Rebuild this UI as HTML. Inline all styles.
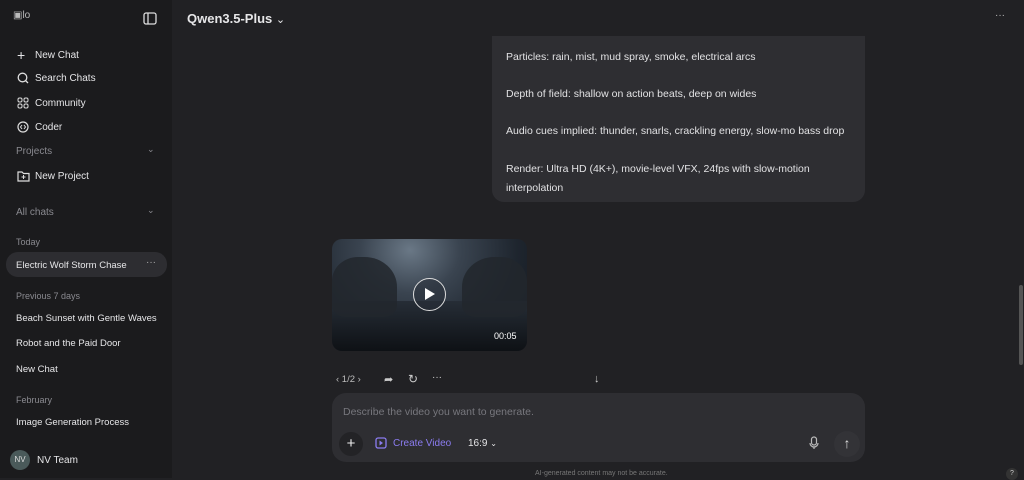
<!DOCTYPE html>
<html><head><style>
*{margin:0;padding:0;box-sizing:border-box}
body{width:1024px;height:478px;overflow:hidden;background:#212124;font-family:"Liberation Sans",sans-serif;color:#e6e6e8;position:relative}
.sb{position:absolute;left:0;top:0;width:172px;height:478px;background:#1b1b1d}
.t{position:absolute;font-size:10px;white-space:nowrap}
.g{color:#8a8a90;font-size:9px}
.ic{position:absolute}
.bub{position:absolute;left:492px;top:36px;width:373px;height:166px;background:#2e2e32;border-radius:0 0 12px 12px}
.bub p{position:absolute;left:14px;font-size:10.5px;color:#e2e2e4;line-height:19px}
.vid{position:absolute;left:332px;top:239px;width:195px;height:112px;border-radius:10px;overflow:hidden;background:radial-gradient(ellipse at 40% 10%,#6a7886 0%,#3a4450 30%,#1e252e 65%,#12161c 100%)}
.in{position:absolute;left:332px;top:393px;width:533px;height:69px;background:#2e2e32;border-radius:14px}
</style></head><body>
<div class="sb">
<div class="t" style="left:13px;top:10px;color:#bbb;font-size:10px">▣lo</div>
<svg class="ic" style="left:143px;top:12px" width="14" height="13" viewBox="0 0 14 13"><rect x="1" y="1" width="12" height="11" rx="2" fill="none" stroke="#ddd" stroke-width="1.3"/><line x1="5" y1="1" x2="5" y2="12" stroke="#ddd" stroke-width="1.3"/></svg>
<div class="t" style="left:17px;top:47px;font-size:14px">+</div><div class="t" style="left:35px;top:50px">New Chat</div>
<svg class="ic" style="left:17px;top:72px" width="12" height="12"><circle cx="5.5" cy="5.5" r="4.3" fill="none" stroke="#ddd" stroke-width="1.3"/><line x1="8.5" y1="8.5" x2="11" y2="11" stroke="#ddd" stroke-width="1.3"/></svg><div class="t" style="left:35px;top:73px">Search Chats</div>
<svg class="ic" style="left:17px;top:97px" width="12" height="12"><rect x="1" y="1" width="4" height="4" rx="1.5" fill="none" stroke="#ddd"/><rect x="7" y="1" width="4" height="4" rx="1.5" fill="none" stroke="#ddd"/><rect x="1" y="7" width="4" height="4" rx="1.5" fill="none" stroke="#ddd"/><rect x="7" y="7" width="4" height="4" rx="1.5" fill="none" stroke="#ddd"/></svg><div class="t" style="left:35px;top:98px">Community</div>
<svg class="ic" style="left:17px;top:121px" width="12" height="12"><circle cx="6" cy="6" r="5" fill="none" stroke="#ddd" stroke-width="1.2"/><path d="M5 4L3.5 6 5 8M7 4L8.5 6 7 8" fill="none" stroke="#ddd"/></svg><div class="t" style="left:35px;top:122px">Coder</div>
<div class="t g" style="left:16px;top:146px;font-size:10px">Projects</div><div class="t g" style="left:147px;top:144px">⌄</div>
<svg class="ic" style="left:17px;top:170px" width="13" height="12"><path d="M1 2h4l1.5 1.5H12v7.5H1z" fill="none" stroke="#ddd" stroke-width="1.2"/><path d="M6.5 5v4M4.5 7h4" stroke="#ddd"/></svg><div class="t" style="left:35px;top:171px">New Project</div>
<div class="t g" style="left:16px;top:207px;font-size:10px">All chats</div><div class="t g" style="left:147px;top:205px">⌄</div>
<div class="t g" style="left:16px;top:237px">Today</div>
<div style="position:absolute;left:6px;top:252px;width:161px;height:25px;background:#2d2d31;border-radius:12px"></div>
<div class="t" style="left:16px;top:260px;font-size:9.5px">Electric Wolf Storm Chase</div><div class="t" style="left:146px;top:257px;color:#aaa">···</div>
<div class="t g" style="left:16px;top:291px">Previous 7 days</div>
<div class="t" style="left:16px;top:313px;font-size:9.5px">Beach Sunset with Gentle Waves</div>
<div class="t" style="left:16px;top:338px;font-size:9.5px">Robot and the Paid Door</div>
<div class="t" style="left:16px;top:364px;font-size:9.5px">New Chat</div>
<div class="t g" style="left:16px;top:395px">February</div>
<div class="t" style="left:16px;top:417px;font-size:9.5px">Image Generation Process</div>
<div style="position:absolute;left:10px;top:450px;width:20px;height:20px;border-radius:50%;background:#4a5a5a;color:#ddd;font-size:8px;text-align:center;line-height:20px">NV</div>
<div class="t" style="left:37px;top:455px">NV Team</div>
</div>
<div class="t" style="left:187px;top:11px;font-size:13px;font-weight:bold">Qwen3.5-Plus <span style="font-weight:normal;font-size:11px">⌄</span></div>
<div class="t" style="left:995px;top:10px;color:#bbb">···</div>
<div style="position:absolute;left:1019px;top:285px;width:4px;height:80px;background:#555;border-radius:2px"></div>
<div class="bub">
<p style="top:12px">Particles: rain, mist, mud spray, smoke, electrical arcs</p>
<p style="top:49px">Depth of field: shallow on action beats, deep on wides</p>
<p style="top:86px">Audio cues implied: thunder, snarls, crackling energy, slow-mo bass drop</p>
<p style="top:124px;width:340px">Render: Ultra HD (4K+), movie-level VFX, 24fps with slow-motion interpolation</p>
</div>
<div class="vid">
<div style="position:absolute;left:0;top:62px;width:195px;height:50px;background:linear-gradient(#262d36,#0e1115)"></div>
<div style="position:absolute;left:0;top:18px;width:65px;height:60px;background:#22272d;border-radius:40% 50% 20% 20%;opacity:.85"></div>
<div style="position:absolute;left:130px;top:18px;width:65px;height:60px;background:#22272d;border-radius:50% 40% 20% 20%;opacity:.85"></div>
<div style="position:absolute;left:81px;top:39px;width:33px;height:33px;border-radius:50%;border:1.5px solid #ddd;background:rgba(40,45,55,.5)"></div>
<svg style="position:absolute;left:92px;top:48px" width="12" height="14"><path d="M1 1L11 7 1 13z" fill="#fff"/></svg>
<div class="t" style="left:162px;top:92px;font-size:9px;color:#fff">00:05</div>
</div>
<div class="t" style="left:336px;top:374px;color:#bbb;font-size:9.5px">‹ 1/2 ›</div>
<div class="t" style="left:384px;top:373px;color:#ccc;font-size:11px">➦</div>
<div class="t" style="left:408px;top:372px;color:#ccc;font-size:12px">↻</div>
<div class="t" style="left:432px;top:372px;color:#ccc">···</div>
<div class="t" style="left:594px;top:373px;color:#ccc;font-size:11px">↓</div>
<div class="in">
<div class="t" style="left:11px;top:13px;color:#77777d;font-size:10.5px">Describe the video you want to generate.</div>
<div style="position:absolute;left:7px;top:39px;width:24px;height:24px;border-radius:50%;background:#232326;color:#eee;text-align:center;line-height:23px;font-size:15px">+</div>
<svg class="ic" style="left:43px;top:44px" width="12" height="12"><rect x="1" y="1" width="10" height="10" rx="2" fill="none" stroke="#8b7cf0" stroke-width="1.3"/><path d="M4.5 3.5L8 6 4.5 8.5z" fill="#8b7cf0"/></svg>
<div class="t" style="left:61px;top:45px;color:#8b7cf0;font-size:10px">Create Video</div>
<div class="t" style="left:136px;top:45px;font-size:10px">16:9 <span style="font-size:8px">⌄</span></div>
<svg class="ic" style="left:477px;top:43px" width="10" height="14"><rect x="2.5" y="1" width="5" height="8" rx="2.5" fill="none" stroke="#bbb" stroke-width="1.2"/><path d="M1 7a4 4 0 0 0 8 0M5 11v2" fill="none" stroke="#bbb" stroke-width="1.2"/></svg>
<div style="position:absolute;left:502px;top:38px;width:26px;height:26px;border-radius:50%;background:#333337;color:#ddd;text-align:center;line-height:25px;font-size:14px">↑</div>
</div>
<div class="t" style="left:535px;top:470px;font-size:7px;color:#777">AI-generated content may not be accurate.</div>
<div style="position:absolute;left:1006px;top:468px;width:12px;height:12px;border-radius:50%;background:#333;color:#ccc;font-size:7px;text-align:center;line-height:12px">?</div>
</body></html>
